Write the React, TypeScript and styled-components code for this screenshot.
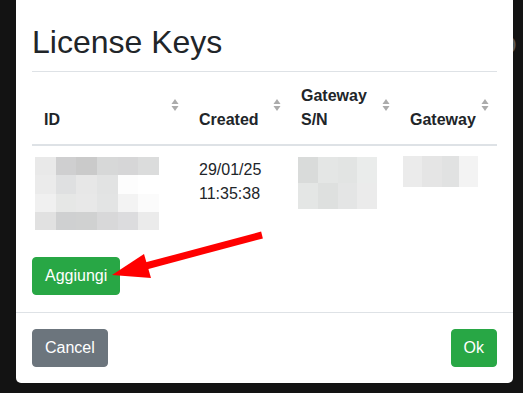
import React from 'react'
import styled, { createGlobalStyle } from 'styled-components'

const GlobalStyle = createGlobalStyle`
  html, body {
    margin: 0;
    padding: 0;
    background: #131313;
  }
  body {
    font-family: "Liberation Sans", Arial, sans-serif;
    color: #212529;
    font-size: 16px;
    line-height: 24px;
  }
`

const Screen = styled.div`
  position: relative;
  width: 523px;
  height: 393px;
  overflow: hidden;
  background: #131313;
  padding-left: 16px;
  box-sizing: border-box;
`

// page content behind the backdrop, barely visible at the right edge
const BehindText = styled.span`
  position: absolute;
  left: 498px;
  top: 30px;
  font-size: 26px;
  line-height: 30px;
  color: #5a5a5a;
`

const ModalContent = styled.div`
  position: relative;
  width: 497px;
  background: #fff;
  border-radius: 0 0 5px 5px;
`

const ModalBody = styled.div`
  padding: 23px 16px 17px;
`

const Title = styled.h2`
  margin: 0 0 10px;
  font-size: 32px;
  line-height: 38px;
  font-weight: 400;
  color: #212529;
`

const Table = styled.div`
  display: grid;
  grid-template-columns: 155px 102px 109px 99px;
  margin-bottom: 15px;
`

const HeadCell = styled.div`
  display: flex;
  gap: 4px;
  padding: 12px 8px 12px 12px;
  border-top: 1px solid #dee2e6;
  border-bottom: 2px solid #dee2e6;
  font-weight: 700;
`

const HeadLabel = styled.span`
  flex: 1;
  align-self: flex-end;
`

const SortIcon = styled.svg`
  align-self: center;
  flex: none;
  margin-bottom: 6px;
`

const Cell = styled.div`
  padding: 12px;
`

const Mosaic = styled.div<{ $cols: string; $rows: string; $dx: number; $dy: number }>`
  display: grid;
  grid-template-columns: ${(p) => p.$cols};
  grid-template-rows: ${(p) => p.$rows};
  margin-left: ${(p) => p.$dx}px;
  margin-top: ${(p) => p.$dy}px;
  width: max-content;
`

const Tile = styled.div<{ $c: string }>`
  background: ${(p) => p.$c};
`

const Button = styled.button<{ $variant: 'success' | 'secondary' }>`
  font-family: inherit;
  font-size: 16px;
  line-height: 24px;
  padding: 6px 12px;
  border: 1px solid ${(p) => (p.$variant === 'success' ? '#28a745' : '#6c757d')};
  background: ${(p) => (p.$variant === 'success' ? '#28a745' : '#6c757d')};
  color: #fff;
  border-radius: 4px;
  cursor: pointer;
`

const ModalFooter = styled.div`
  display: flex;
  justify-content: space-between;
  padding: 16px;
  border-top: 1px solid #dee2e6;
`

const Annotation = styled.svg`
  position: absolute;
  left: 0;
  top: 0;
  pointer-events: none;
`

function Sort() {
  return (
    <SortIcon width="8" height="12" viewBox="0 0 8 12">
      <polygon points="0.5,5 4,0 7.5,5" fill="#ababab" />
      <polygon points="0.5,7 4,12 7.5,7" fill="#ababab" />
    </SortIcon>
  )
}

const idTiles = [
  ['#e9e9e9', '#cfcfd0', '#cacaca', '#d7d8d8', '#d6d6d7', '#dbdcdc'],
  ['#ebebeb', '#dfe0e1', '#e7e7e7', '#e2e3e3', '#fdfdfd', '#ffffff'],
  ['#f0f0f0', '#e6e7e6', '#e8e8e8', '#e3e4e4', '#f3f3f3', '#fbfbfb'],
  ['#e1e1e1', '#cfd0d1', '#d0d1d1', '#d8d8d9', '#dcdcde', '#ebebeb'],
]

const snTiles = [
  ['#d9dbda', '#e4e6e5', '#e2e4e3', '#eaeceb'],
  ['#e4e6e5', '#dee0df', '#e4e5e5', '#ebebeb'],
]

const gwTiles = [['#ebebeb', '#e5e5e5', '#e1e2e2', '#f3f3f3']]

function Redacted(props: { tiles: string[][]; cols: string; rows: string; dx: number; dy: number }) {
  return (
    <Mosaic $cols={props.cols} $rows={props.rows} $dx={props.dx} $dy={props.dy}>
      {props.tiles.flat().map((c, i) => (
        <Tile key={i} $c={c} />
      ))}
    </Mosaic>
  )
}

export default function App() {
  return (
    <Screen>
      <GlobalStyle />
      <BehindText>D</BehindText>
      <ModalContent>
        <ModalBody>
          <Title>License Keys</Title>
          <Table>
            <HeadCell>
              <HeadLabel>ID</HeadLabel>
              <Sort />
            </HeadCell>
            <HeadCell>
              <HeadLabel>Created</HeadLabel>
              <Sort />
            </HeadCell>
            <HeadCell>
              <HeadLabel>Gateway S/N</HeadLabel>
              <Sort />
            </HeadCell>
            <HeadCell>
              <HeadLabel>Gateway</HeadLabel>
              <Sort />
            </HeadCell>

            <Cell>
              <Redacted tiles={idTiles} cols="21px 20px 21px 21px 20px 21px" rows="18px 19px 18px 18px" dx={-9} dy={-1} />
            </Cell>
            <Cell>29/01/25 11:35:38</Cell>
            <Cell>
              <Redacted tiles={snTiles} cols="20px 20px 19px 20px" rows="26px 26px" dx={-3} dy={-1} />
            </Cell>
            <Cell>
              <Redacted tiles={gwTiles} cols="19px 20px 17px 19px" rows="31px" dx={-7} dy={-2} />
            </Cell>
          </Table>
          <Button $variant="success">Aggiungi</Button>
        </ModalBody>
        <ModalFooter>
          <Button $variant="secondary">Cancel</Button>
          <Button $variant="success">Ok</Button>
        </ModalFooter>
      </ModalContent>
      <Annotation width="523" height="393" viewBox="0 0 523 393">
        <line x1="262" y1="235" x2="142" y2="267" stroke="#ff0000" strokeWidth="7" />
        <polygon points="144,254 151,278 112,275" fill="#ff0000" />
      </Annotation>
    </Screen>
  )
}
